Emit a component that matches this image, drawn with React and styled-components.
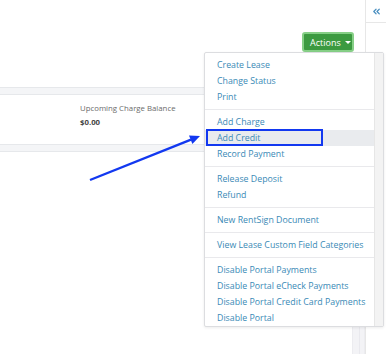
import React from "react";
import styled, { createGlobalStyle } from "styled-components";
import { ChevronsLeft } from "lucide-react";

const GlobalStyle = createGlobalStyle`
  html, body {
    margin: 0;
    padding: 0;
    background: #ffffff;
  }
  body {
    font-family: "Open Sans", "DejaVu Sans", sans-serif;
  }
`;

const Page = styled.div`
  position: relative;
  display: flex;
  width: 386px;
  height: 354px;
  overflow: hidden;
  background: #fff;
`;

const Main = styled.div`
  flex: 1;
  display: flex;
  flex-direction: column;
`;

const Header = styled.div`
  height: 87px;
  display: flex;
  justify-content: flex-end;
  align-items: flex-start;
  padding: 32px 11px 0 0;
  box-sizing: border-box;
`;

const ActionsWrap = styled.div`
  position: relative;
`;

const ActionsButton = styled.button`
  display: flex;
  align-items: center;
  gap: 4px;
  height: 20px;
  width: 52px;
  padding: 0 0 0 6px;
  box-sizing: border-box;
  border: 2px solid #86cf86;
  border-radius: 3px;
  background: #3c9a40;
  color: #fff;
  font-family: inherit;
  font-size: 9px;
  cursor: pointer;
`;

const Caret = styled.span`
  width: 0;
  height: 0;
  border-left: 3px solid transparent;
  border-right: 3px solid transparent;
  border-top: 3px solid #fff;
`;

const Strip = styled.div`
  height: 8px;
  background: #f4f5f7;
  border-top: 1px solid #e6e8eb;
  border-bottom: 1px solid #e6e8eb;
  box-sizing: border-box;
`;

const CardRow = styled.div`
  height: 49px;
  display: flex;
  padding: 8px 0 0 80px;
  box-sizing: border-box;
`;

const Stat = styled.div`
  display: flex;
  flex-direction: column;
  gap: 4px;
`;

const StatLabel = styled.span`
  font-size: 7.8px;
  color: #6b6b6b;
  line-height: 10px;
`;

const StatValue = styled.span`
  font-size: 7.8px;
  font-weight: 700;
  color: #444;
  line-height: 10px;
`;

const Lower = styled.div`
  flex: 1;
  display: flex;
  justify-content: flex-end;
`;

const Track = styled.div`
  width: 13px;
  background: #f3f3f6;
  border-left: 1px solid #ececf0;
  border-right: 1px solid #ececf0;
  box-sizing: border-box;
  background-image: linear-gradient(#e9e9ee, #e9e9ee);
  background-size: 1px 100%;
  background-position: 6px 0;
  background-repeat: no-repeat;
`;

const Sidebar = styled.div`
  width: 21px;
  border-left: 1px solid #e7e7e7;
  box-sizing: border-box;
`;

const SidebarTop = styled.div`
  height: 23px;
  padding-top: 1px;
  border-bottom: 1px solid #e7e7e7;
  box-sizing: border-box;
  display: flex;
  align-items: center;
  justify-content: center;
  color: #4a8fc0;
`;

const Dropdown = styled.div`
  position: absolute;
  top: 100%;
  right: -30px;
  width: 180px;
  box-sizing: border-box;
  display: flex;
  background: #fff;
  border: 1px solid #dcdde0;
  border-radius: 2px;
  box-shadow: 0 1px 3px rgba(0, 0, 0, 0.08);
  z-index: 5;
`;

const MenuList = styled.div`
  flex: 1;
  padding: 4px 0 0;
`;

const ScrollBar = styled.div`
  width: 8px;
  background: #f3f3f3;
  border-left: 1px solid #e6e6e6;
`;

const Item = styled.div`
  height: 16px;
  line-height: 16px;
  padding-left: 12px;
  font-size: 8.8px;
  color: #3a8ab6;
  white-space: nowrap;
  background: ${(p) => (p.$active ? "#e9ebee" : "transparent")};
`;

const Divider = styled.div`
  height: 1px;
  background: #e9e9ec;
  margin: 4px 0;
`;

const Highlight = styled.div`
  position: absolute;
  left: 206px;
  top: 129px;
  width: 117px;
  height: 17px;
  border: 2px solid #1238f0;
  box-sizing: border-box;
  z-index: 6;
`;

const ArrowSvg = styled.svg`
  position: absolute;
  left: 0;
  top: 0;
  z-index: 6;
  pointer-events: none;
`;

const groups = [
  ["Create Lease", "Change Status", "Print"],
  ["Add Charge", "Add Credit", "Record Payment"],
  ["Release Deposit", "Refund"],
  ["New RentSign Document"],
  ["View Lease Custom Field Categories"],
  [
    "Disable Portal Payments",
    "Disable Portal eCheck Payments",
    "Disable Portal Credit Card Payments",
    "Disable Portal",
  ],
];

export default function App() {
  return (
    <>
      <GlobalStyle />
      <Page>
        <Main>
          <Header>
            <ActionsWrap>
              <ActionsButton>
                Actions <Caret />
              </ActionsButton>
              <Dropdown>
                <MenuList>
                  {groups.map((g, i) => (
                    <React.Fragment key={i}>
                      {i > 0 && <Divider />}
                      {g.map((label) => (
                        <Item key={label} $active={label === "Add Credit"}>
                          {label}
                        </Item>
                      ))}
                    </React.Fragment>
                  ))}
                </MenuList>
                <ScrollBar />
              </Dropdown>
            </ActionsWrap>
          </Header>
          <Strip />
          <CardRow>
            <Stat>
              <StatLabel>Upcoming Charge Balance</StatLabel>
              <StatValue>$0.00</StatValue>
            </Stat>
          </CardRow>
          <Strip />
          <Lower>
            <Track />
          </Lower>
        </Main>
        <Sidebar>
          <SidebarTop>
            <ChevronsLeft size={11} strokeWidth={2.6} />
          </SidebarTop>
        </Sidebar>
        <Highlight />
        <ArrowSvg width="386" height="354" viewBox="0 0 386 354">
          <line x1="90" y1="180" x2="191" y2="139.7" stroke="#1238f0" strokeWidth="2.4" />
          <polygon points="200,136 192.4,143.9 189,135.5" fill="#1238f0" />
        </ArrowSvg>
      </Page>
    </>
  );
}
